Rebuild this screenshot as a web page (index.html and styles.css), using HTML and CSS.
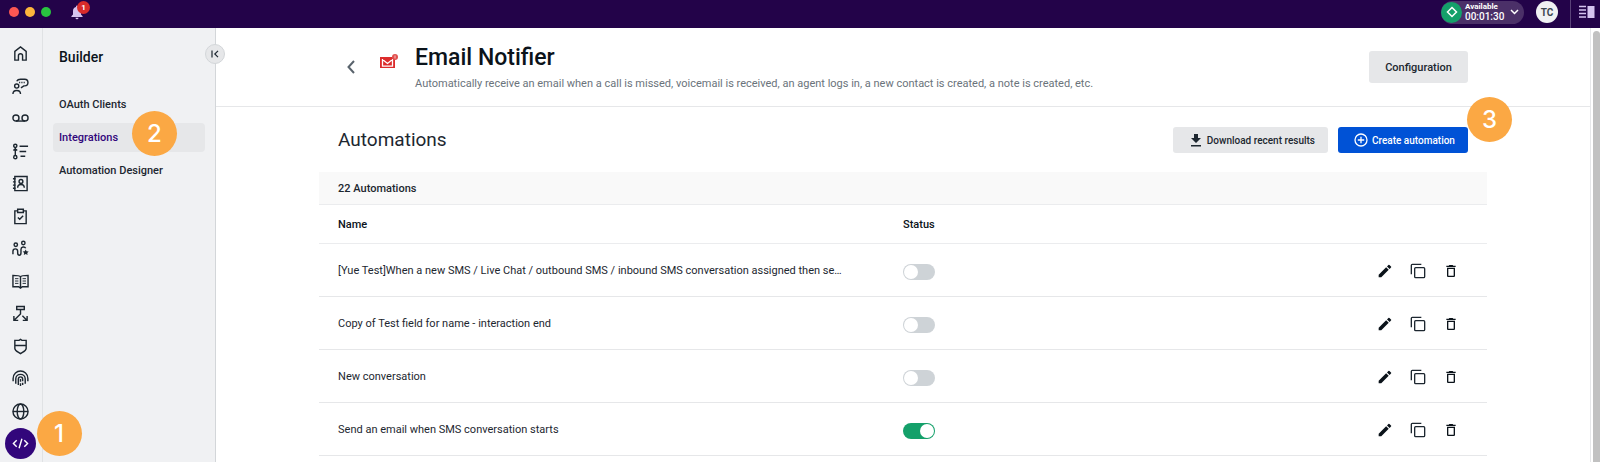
FILE: index.html
```
<!DOCTYPE html>
<html lang="en">
<head>
<meta charset="UTF-8">
<meta name="viewport" content="width=device-width, initial-scale=1.0">
<title>Email Notifier</title>
<link rel="stylesheet" href="styles.css">
</head>
<body>

<svg class="sprite" aria-hidden="true">
  <symbol id="icon-edit" viewBox="0 0 24 24">
    <path d="M2.500 17.600V21.500H6.400L17.600 10.300L13.700 6.400ZM21 6.900A1.100 1.100 0 0 0 21 5.300L18.700 3A1.100 1.100 0 0 0 17.100 3L15 5.100L18.900 9Z"/>
  </symbol>
  <symbol id="icon-copy" viewBox="0 0 24 24">
    <path d="M2 17V3.500Q2 2 3.500 2H17M7 8.500Q7 7 8.500 7H20.500Q22 7 22 8.500V20.500Q22 22 20.500 22H8.500Q7 22 7 20.500Z" fill="none" stroke="currentColor" stroke-width="2"/>
  </symbol>
  <symbol id="icon-trash" viewBox="0 0 24 24">
    <path d="M16 9v10H8V9h8m-1.500-6h-5l-1 1H5v2h14V4h-3.500l-1-1zM18 7H6v12c0 1.100.9 2 2 2h8c1.100 0 2-.9 2-2V7z"/>
  </symbol>
</svg>

<header class="topbar">
  <div class="lights">
    <span class="light red"></span>
    <span class="light yellow"></span>
    <span class="light green"></span>
  </div>
  <button class="bell" aria-label="Notifications">
    <svg width="14" height="16" viewBox="0 0 14 16"><path d="M7 1.500a1 1 0 0 1 1 1v.5a4 4 0 0 1 3 4v3.500l1.600 1.800v.7H1.400v-.7L3 10.500V7a4 4 0 0 1 3-4v-.5a1 1 0 0 1 1-1zM5.500 13.700h3a1.500 1.500 0 0 1-3 0z" fill="#d5c3ef"/></svg>
    <span class="bell-count">1</span>
  </button>
  <div class="topbar-right">
    <button class="status">
      <span class="status-dot">
        <svg width="12" height="12" viewBox="0 0 12 12"><path d="M6 1.500L10.500 6L6 10.500L1.500 6Z" fill="none" stroke="#fff" stroke-width="1.500"/></svg>
      </span>
      <span class="status-text"><span class="status-name">Available</span><span class="status-time">00:01:30</span></span>
      <svg class="status-arrow" width="9" height="6" viewBox="0 0 9 6"><path d="M1 1l3.500 3.500L8 1" fill="none" stroke="#fff" stroke-width="1.500"/></svg>
    </button>
    <button class="avatar">TC</button>
    <button class="panel-toggle" aria-label="Toggle panel">
      <svg width="16" height="14" viewBox="0 0 16 14"><path d="M0 1.500h7M0 5h7M0 8.500h7M0 12h7" stroke="#d5c3ef" stroke-width="1.500"/><rect x="8.500" y="1" width="7" height="12" fill="#d5c3ef"/></svg>
    </button>
  </div>
</header>

<div class="layout">
  <nav class="rail" aria-label="Main">
    <a class="rail-link" href="#" aria-label="Home">
      <svg viewBox="0 0 18 18"><path d="M3 6.700L9 2l6 4.700V16h-3.800v-4.500a2.200 2.200 0 0 0-4.400 0V16H3z"/></svg>
    </a>
    <a class="rail-link" href="#" aria-label="Conversations">
      <svg viewBox="0 0 18 18"><circle cx="5" cy="8.500" r="2.200"/><path d="M1 17c0-5 8-5 8 0M5 3.500C6 1.500 7.500 1.300 9 1.300h4.500c4.500 0 4.500 7 0 7h-1L9.500 10.500"/><path d="M7.500 4.800h6" stroke-dasharray="1.200 1.200"/></svg>
    </a>
    <a class="rail-link" href="#" aria-label="Voicemail">
      <svg viewBox="0 0 18 18"><circle cx="4.200" cy="8.500" r="3.200"/><circle cx="13.800" cy="8.500" r="3.200"/><path d="M4.200 11.700h9.600"/></svg>
    </a>
    <a class="rail-link" href="#" aria-label="Activities">
      <svg viewBox="0 0 18 18"><circle cx="3.500" cy="3" r="1.700"/><circle cx="3.500" cy="15" r="1.700"/><path d="M3.500 4.700v8.600M1.500 8l2-2 2 2M8 3.500h9M8 9h7M9 14h5" /></svg>
    </a>
    <a class="rail-link" href="#" aria-label="Contacts">
      <svg viewBox="0 0 18 18"><path d="M3 1.500h13v15H3zM1 4h3M1 7.300h3M1 10.700h3M1 14h3"/><circle cx="9.500" cy="6.800" r="2"/><path d="M6 13.500c0-4.500 7-4.500 7 0"/></svg>
    </a>
    <a class="rail-link" href="#" aria-label="Tasks">
      <svg viewBox="0 0 18 18"><path d="M6 3H3v13.500h12V3h-3M6 1.300h6v3.400H6zM6.200 10l2 2 3.600-3.800"/></svg>
    </a>
    <a class="rail-link" href="#" aria-label="Teams">
      <svg viewBox="0 0 18 18"><circle cx="4" cy="5" r="1.800"/><circle cx="12" cy="3.200" r="1.800"/><path d="M1 15v-3c0-3.500 5-3.500 5 0v1.500c0 3.500 3.500 3.500 3.500 0V10c0-3 4-3.300 5-1.200"/><path d="M14.500 10l1 2 2.200.3-1.600 1.500.4 2.200-2-1.100-2 1.100.4-2.200-1.600-1.500 2.200-.3z" fill="#1d2730" stroke="none"/></svg>
    </a>
    <a class="rail-link" href="#" aria-label="Knowledge">
      <svg viewBox="0 0 18 18"><path d="M9 4V16M9 4C8 2.500 6.500 2.500 1 2.500v12h6L9 16l2-1.500h6v-12c-5.500 0-7 0-8 1.500"/><path d="M3.200 6h3.600M3.200 8.500h3.600M3.200 11h3.600M11.200 6h3.600M11.200 8.500h3.600M11.200 11h3.600" stroke-width="1"/></svg>
    </a>
    <a class="rail-link" href="#" aria-label="Routing">
      <svg viewBox="0 0 18 18"><path d="M5 1.500h8v3.200H5zM9 4.700v4.800L2.500 16M11 11.500l4.500 4.500M2 11.700v4.600h4.600M16 11.700v4.600h-4.600"/></svg>
    </a>
    <a class="rail-link" href="#" aria-label="Security">
      <svg viewBox="0 0 18 18"><path d="M9 1.500l1.500 1H15V11c0 2.500-3 3.500-6 5.500-3-2-6-3-6-5.500V2.500h4.500zM3 8h12"/></svg>
    </a>
    <a class="rail-link" href="#" aria-label="Identity">
      <svg viewBox="0 0 18 18"><path d="M1.200 12V9c0-10.500 15.600-10.500 15.600 0v3M4 14.500V9.500c0-6.500 10-6.500 10 0v5M6.700 16V9.700c0-3.200 4.600-3.200 4.600 0V12M11.300 13.500V16M9 9.500v3M9 14v3"/></svg>
    </a>
    <a class="rail-link" href="#" aria-label="Languages">
      <svg viewBox="0 0 18 18"><circle cx="9" cy="9" r="8"/><ellipse cx="9" cy="9" rx="3.500" ry="8"/><path d="M1 9h16"/></svg>
    </a>
    <a class="rail-link active" href="#" aria-label="Builder">
      <svg viewBox="0 0 18 18"><path d="M5 5.500L1.500 9L5 12.500M13 5.500L16.500 9L13 12.500M10.500 4L7.500 14"/></svg>
      <span class="step step-1">1</span>
    </a>
  </nav>

  <aside class="sidebar">
    <h2 class="sidebar-title">Builder</h2>
    <button class="collapse" aria-label="Collapse menu">
      <svg width="8" height="8" viewBox="0 0 8 8"><path d="M1 .5v7M7 .8L3.800 4L7 7.200" fill="none" stroke="#1d2730" stroke-width="1.200"/></svg>
    </button>
    <a class="sidebar-link" href="#">OAuth Clients</a>
    <a class="sidebar-link active" href="#">Integrations<span class="step step-2">2</span></a>
    <a class="sidebar-link" href="#">Automation Designer</a>
  </aside>

  <main class="main">
    <div class="page-header">
      <div class="page-header-inner">
        <button class="back" aria-label="Back">
          <svg width="8" height="14" viewBox="0 0 8 14"><path d="M7 1L1.500 7L7 13" fill="none" stroke="#59636c" stroke-width="2"/></svg>
        </button>
        <svg class="mail-icon" width="18" height="14" viewBox="0 0 18 14"><rect y="3" width="15" height="11" fill="#dc2c2c"/><path d="M2.500 5v7.200h10V5M2.500 5.500L7.500 9.500L12.500 5.500" fill="none" stroke="#fff" stroke-width="1.300"/><circle cx="15" cy="3" r="3" fill="#e0504e"/><path d="M15 1.500v3" stroke="#f7c0bf"/></svg>
        <div class="page-heading">
          <h1>Email Notifier</h1>
          <p>Automatically receive an email when a call is missed, voicemail is received, an agent logs in, a new contact is created, a note is created, etc.</p>
        </div>
        <button class="btn btn-large">Configuration</button>
      </div>
    </div>

    <section class="content">
      <div class="section-header">
        <h2>Automations</h2>
        <button class="btn btn-download">
          <svg width="12" height="14" viewBox="0 0 12 14"><path d="M4 1h4v4h3L6 10L1 5h3zM1 12h10v1.500H1z" fill="#1d2730"/></svg>
          Download recent results
        </button>
        <button class="btn btn-primary">
          <svg width="14" height="14" viewBox="0 0 14 14"><g fill="none" stroke="#fff" stroke-width="1.300"><circle cx="7" cy="7" r="6"/><path d="M7 3.800v6.400M3.800 7h6.400"/></g></svg>
          Create automation
          <span class="step step-3">3</span>
        </button>
      </div>

      <div class="count">22 Automations</div>
      <table class="automations">
        <thead>
          <tr><th class="col-name">Name</th><th>Status</th><th class="col-actions" aria-label="Actions"></th></tr>
        </thead>
        <tbody>
          <tr>
            <td>[Yue Test]When a new SMS / Live Chat / outbound SMS / inbound SMS conversation assigned then se…</td>
            <td><input class="toggle" type="checkbox" aria-label="Status"></td>
            <td class="col-actions">
              <button aria-label="Edit"><svg><use href="#icon-edit"/></svg></button>
              <button aria-label="Copy"><svg><use href="#icon-copy"/></svg></button>
              <button aria-label="Delete"><svg><use href="#icon-trash"/></svg></button>
            </td>
          </tr>
          <tr>
            <td>Copy of Test field for name - interaction end</td>
            <td><input class="toggle" type="checkbox" aria-label="Status"></td>
            <td class="col-actions">
              <button aria-label="Edit"><svg><use href="#icon-edit"/></svg></button>
              <button aria-label="Copy"><svg><use href="#icon-copy"/></svg></button>
              <button aria-label="Delete"><svg><use href="#icon-trash"/></svg></button>
            </td>
          </tr>
          <tr>
            <td>New conversation</td>
            <td><input class="toggle" type="checkbox" aria-label="Status"></td>
            <td class="col-actions">
              <button aria-label="Edit"><svg><use href="#icon-edit"/></svg></button>
              <button aria-label="Copy"><svg><use href="#icon-copy"/></svg></button>
              <button aria-label="Delete"><svg><use href="#icon-trash"/></svg></button>
            </td>
          </tr>
          <tr>
            <td>Send an email when SMS conversation starts</td>
            <td><input class="toggle" type="checkbox" aria-label="Status" checked></td>
            <td class="col-actions">
              <button aria-label="Edit"><svg><use href="#icon-edit"/></svg></button>
              <button aria-label="Copy"><svg><use href="#icon-copy"/></svg></button>
              <button aria-label="Delete"><svg><use href="#icon-trash"/></svg></button>
            </td>
          </tr>
        </tbody>
      </table>
    </section>
  </main>

  <div class="scrollbar"><div class="scrollbar-thumb"></div></div>
</div>

</body>
</html>
```

FILE: styles.css
```
* {
  box-sizing: border-box;
}
body {
  margin: 0;
  height: 100vh;
  display: flex;
  flex-direction: column;
  overflow: hidden;
  background-color: #fff;
  color: #1d2730;
  font-family: Roboto, "Liberation Sans", sans-serif;
  font-size: 11px;
  line-height: 16px;
}
h1, h2, p {
  margin: 0;
}
button {
  margin: 0;
  padding: 0;
  border: none;
  background: none;
  color: inherit;
  font-family: inherit;
  cursor: pointer;
}
a {
  color: inherit;
  text-decoration: none;
}
svg {
  display: block;
}
.sprite {
  position: absolute;
  width: 0;
  height: 0;
}

/* top bar */
.topbar {
  display: flex;
  align-items: center;
  flex: none;
  height: 28px;
  padding: 0 5px 4px 9px;
  background-color: #230349;
}
.lights {
  display: flex;
  gap: 6px;
}
.light {
  width: 10px;
  height: 10px;
  border-radius: 50%;
}
.red {
  background-color: #fc5753;
}
.yellow {
  background-color: #fdb53c;
}
.green {
  background-color: #29c440;
}
.bell {
  position: relative;
  margin-left: 19px;
}
.bell-count {
  position: absolute;
  top: -3px;
  left: 7px;
  width: 13px;
  height: 13px;
  border-radius: 50%;
  background-color: #d92b2b;
  color: #fff;
  font-size: 8px;
  font-weight: 700;
  line-height: 13px;
}
.topbar-right {
  display: flex;
  align-items: center;
  height: 28px;
  margin-left: auto;
  margin-bottom: -4px;
  padding-bottom: 4px;
}
.status {
  display: flex;
  align-items: center;
  height: 23px;
  padding-right: 5px;
  border-radius: 12px;
  background-color: #4b3068;
  color: #fff;
  text-align: left;
}
.status-dot {
  display: flex;
  align-items: center;
  justify-content: center;
  width: 21px;
  height: 21px;
  border-radius: 50%;
  background-color: #14a06a;
}
.status-text {
  display: flex;
  flex-direction: column;
  width: 40px;
  margin-left: 3px;
  font-weight: 500;
}
.status-name {
  font-size: 8px;
  font-weight: 700;
  line-height: 10px;
}
.status-time {
  font-size: 10px;
  line-height: 10px;
}
.status-arrow {
  margin-left: 5px;
}
.avatar {
  width: 22px;
  height: 22px;
  margin: 0 12px;
  border-radius: 50%;
  background-color: #f0f1f3;
  color: #3c4650;
  font-size: 10px;
  font-weight: 700;
}
.panel-toggle {
  height: 28px;
  margin-bottom: -4px;
  padding: 0 0 4px 8px;
  border-left: 1px solid #5a4279;
}

/* layout */
.layout {
  display: flex;
  flex: 1;
  min-height: 0;
}
.rail {
  position: relative;
  z-index: 1;
  display: flex;
  flex-direction: column;
  align-items: center;
  justify-content: space-between;
  width: 43px;
  padding: 10px 2px 3px 0;
  border-right: 1px solid #e0e2e4;
  background-color: #f0f1f3;
}
.rail-link {
  position: relative;
  display: flex;
  align-items: center;
  justify-content: center;
  width: 31px;
  height: 31px;
  border-radius: 50%;
}
.rail-link svg {
  width: 17px;
  height: 17px;
  fill: none;
  stroke: #1d2730;
  stroke-width: 1.5;
}
.rail-link.active {
  background-color: #32067b;
}
.rail-link.active svg {
  stroke: #fff;
}
.sidebar {
  position: relative;
  display: flex;
  flex-direction: column;
  gap: 4px;
  width: 173px;
  padding: 19px 10px 0;
  border-right: 1px solid #d3d6d9;
  background-color: #f0f1f3;
}
.sidebar-title {
  margin: 0 0 19px 6px;
  color: #0b131a;
  font-size: 14px;
  font-weight: 500;
  line-height: 20px;
}
.collapse {
  position: absolute;
  top: 16px;
  right: -10px;
  display: flex;
  align-items: center;
  justify-content: center;
  width: 20px;
  height: 20px;
  border: 1px solid #d3d6d9;
  border-radius: 50%;
  background-color: #e6e7e9;
}
.sidebar-link {
  position: relative;
  padding: 6px;
  border-radius: 4px;
  font-weight: 500;
  line-height: 17px;
}
.sidebar-link.active {
  background-color: #e6e7e9;
  color: #32067b;
}

/* step markers */
.step {
  position: absolute;
  width: 45px;
  height: 45px;
  border-radius: 50%;
  background-color: #fba844;
  color: #fff;
  font-family: Inter, sans-serif;
  font-size: 24px;
  font-weight: 500;
  line-height: 45px;
  text-align: center;
}
.step-1 {
  top: -17px;
  left: 32px;
}
.step-2 {
  top: -12px;
  left: 79px;
}
.step-3 {
  top: -30px;
  right: -44px;
}

/* main */
.main {
  flex: 1;
  min-width: 0;
}
.page-header {
  border-bottom: 1px solid #e6e7e9;
}
.page-header-inner {
  display: flex;
  align-items: center;
  width: 85%;
  min-height: 78px;
  margin: 0 auto;
  padding: 0 19px 0 28px;
}
.mail-icon {
  margin: 0 17px 12px 25px;
}
.page-heading {
  flex: 1;
  padding-top: 2px;
}
.page-heading h1 {
  margin-bottom: 4px;
  color: #0b131a;
  font-size: 23px;
  font-weight: 500;
  line-height: 28px;
}
.page-heading p {
  color: #6a737b;
}
.btn {
  position: relative;
  display: flex;
  align-items: center;
  height: 26px;
  padding: 0 13px;
  border-radius: 3px;
  background-color: #e6e7e9;
  color: #1d2730;
  font-size: 10px;
  font-weight: 500;
}
.btn-large {
  height: 32px;
  padding: 0 16px;
  font-size: 11px;
}
.btn-download {
  gap: 5px;
  padding-left: 17px;
}
.btn-primary {
  gap: 4px;
  padding-left: 16px;
  background-color: #0052d6;
  color: #fff;
}
.content {
  width: 85%;
  margin: 0 auto;
}
.section-header {
  display: flex;
  align-items: center;
  gap: 10px;
  padding: 20px 19px 19px;
}
.section-header h2 {
  flex: 1;
  font-size: 19px;
  font-weight: 400;
  line-height: 26px;
}
.count {
  padding: 9px 19px 7px;
  border-bottom: 1px solid #ebecee;
  background-color: #f9f9f9;
  font-weight: 500;
}
.automations {
  width: 100%;
  border-spacing: 0;
  table-layout: fixed;
}
.automations th {
  height: 39px;
  padding: 2px 0 0;
  border-bottom: 1px solid #ebecee;
  color: #0b131a;
  font-weight: 500;
  text-align: left;
}
.automations td {
  height: 53px;
  padding: 2px 0 0;
  border-bottom: 1px solid #e6e7e9;
}
.automations .col-name {
  width: 50%;
}
.automations th:first-child,
.automations td:first-child {
  padding-left: 19px;
  white-space: nowrap;
}
.automations .col-actions {
  padding-right: 28px;
  font-size: 0;
  line-height: 0;
  text-align: right;
}
.col-actions button {
  margin-left: 17px;
  vertical-align: middle;
}
.col-actions svg {
  width: 16px;
  height: 16px;
  fill: #0b131a;
  color: #1d2730;
}
.toggle {
  display: block;
  appearance: none;
  width: 32px;
  height: 16px;
  margin: 2px 0 0;
  padding: 1px;
  border-radius: 8px;
  background-color: #ced3d7;
  cursor: pointer;
}
.toggle::before {
  content: "";
  display: block;
  width: 14px;
  height: 14px;
  border-radius: 50%;
  background-color: #fff;
}
.toggle:checked {
  background-color: #14a06a;
}
.toggle:checked::before {
  margin-left: auto;
}

.scrollbar {
  width: 10px;
  padding: 3px 0 0 2px;
  border-left: 1px solid #e6e7e9;
}
.scrollbar-thumb {
  height: 100%;
  border-radius: 4px 4px 0 0;
  background-color: #c1c1c1;
}
```
